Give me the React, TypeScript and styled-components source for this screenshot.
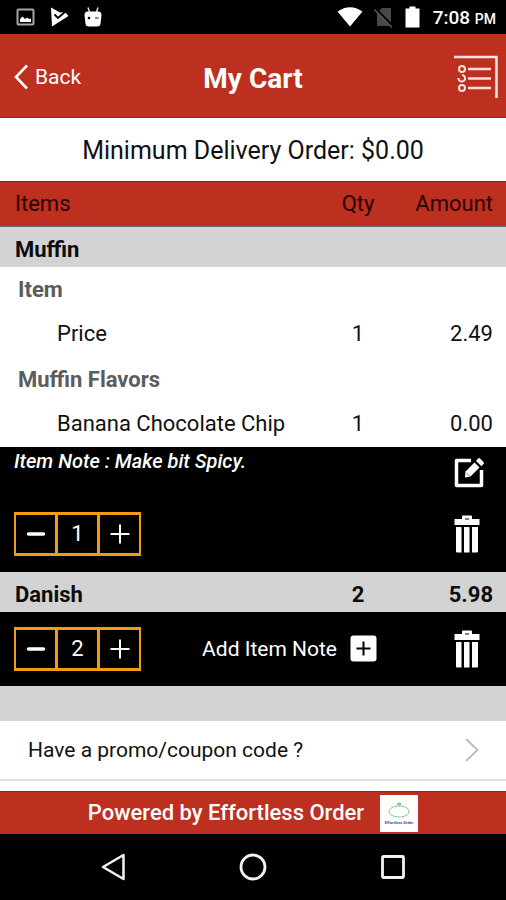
import React from "react";
import styled, { createGlobalStyle } from "styled-components";

const red = "#bd2f1e";
const silver = "#d3d3d3";
const orange = "#f39c12";

const GlobalStyle = createGlobalStyle`
  *, *::before, *::after { box-sizing: border-box; }
  body { margin: 0; background: #fff; font-family: Roboto, "Liberation Sans", sans-serif; color: #111; }
  button { border: 0; padding: 0; background: none; color: inherit; font: inherit; cursor: pointer; }
  svg { display: block; }
`;

const Page = styled.div`
  display: flex;
  flex-direction: column;
  min-height: 100vh;
`;

const StatusBar = styled.div`
  display: flex;
  align-items: center;
  justify-content: space-between;
  height: 34px;
  padding: 0 10px 0 16px;
  background: #000;
  color: #fff;
`;

const StatusGroup = styled.div<{ $gap: number }>`
  display: flex;
  align-items: center;
  gap: ${(p) => p.$gap}px;
`;

const Clock = styled.span`
  padding: 3px 0 0 2px;
  font-size: 19px;
  font-weight: 500;
  line-height: 24px;
  small { font-size: 14px; }
`;

const Header = styled.header`
  display: grid;
  grid-template-columns: 1fr auto 1fr;
  align-items: center;
  height: 84px;
  padding: 0 8px;
  background: ${red};
  border-bottom: 1px solid #b3150c;
  color: #fff;
`;

const BackButton = styled.button`
  display: flex;
  align-items: center;
  gap: 7px;
  justify-self: start;
  padding: 2px 0 0 6px;
  font-size: 21px;
  line-height: 28px;
`;

const Title = styled.h1`
  margin: 6px 0 0;
  font-size: 28px;
  line-height: 32px;
  font-weight: 700;
`;

const OrdersButton = styled.button`
  justify-self: end;
`;

const Minimum = styled.p`
  margin: 0;
  padding: 3px 0 0;
  font-size: 25px;
  line-height: 60px;
  text-align: center;
`;

const Cart = styled.table`
  width: 100%;
  border-collapse: collapse;
  table-layout: fixed;
  font-size: 22px;
  line-height: 28px;
  th, td { padding: 0; text-align: left; }
`;

const Column = styled.col<{ $width?: number }>`
  width: ${(p) => (p.$width ? `${p.$width}px` : "auto")};
`;

const HeadRow = styled.tr`
  height: 45px;
  background: ${red};
  border-top: 1px solid #b3150c;
  border-bottom: 1px solid #6b6b6b;
  color: #240503;
  th { font-weight: 400; }
`;

const ProductRow = styled.tr`
  height: 40px;
  background: ${silver};
  color: #0c0c0c;
  th, td { padding-top: 7px; font-weight: 700; }
`;

const GroupRow = styled.tr`
  height: 45px;
  color: #5c5c5c;
  th { padding-top: 2px; font-weight: 700; }
`;

const OptionRow = styled.tr`
  height: 45px;
  th { font-weight: 400; }
`;

const Label = styled.th<{ $indent: number }>`
  && { padding-left: ${(p) => p.$indent}px; }
`;

const Qty = styled.td`
  && { text-align: center; }
`;

const Amount = styled.td`
  && { padding-right: 13px; text-align: right; }
`;

const ControlsRow = styled.tr`
  background: #000;
  color: #fff;
`;

const NoteBar = styled.div`
  display: flex;
  justify-content: space-between;
  height: 50px;
  padding: 0 21px 0 14px;
`;

const Note = styled.em`
  font-size: 20px;
  font-weight: 500;
`;

const ControlBar = styled.div<{ $height: number }>`
  display: flex;
  align-items: center;
  height: ${(p) => p.$height}px;
  padding: 0 23px 0 14px;
`;

const IconButton = styled.button`
  display: flex;
  align-items: center;
  justify-content: center;
  width: 32px;
`;

const Stepper = styled.div`
  display: grid;
  grid-template-columns: repeat(3, 1fr);
  gap: 3px;
  width: 127px;
  height: 44px;
  margin-right: auto;
  padding: 3px 2px;
  background: ${orange};
`;

const StepCell = styled.output`
  display: flex;
  align-items: center;
  justify-content: center;
  background: #000;
`;

const StepButton = styled.button`
  display: flex;
  align-items: center;
  justify-content: center;
  background: #000;
`;

const AddNote = styled.button`
  display: flex;
  align-items: center;
  gap: 13px;
  margin-right: 74px;
  font-size: 21px;
`;

const Spacer = styled.div`
  height: 35px;
  background: ${silver};
`;

const Promo = styled.button`
  display: flex;
  align-items: center;
  justify-content: space-between;
  width: 100%;
  height: 60px;
  padding: 1px 27px 0 28px;
  border-bottom: 2px solid #e2e2e2;
  font-size: 21px;
  line-height: 28px;
`;

const Main = styled.main`
  flex: 1;
  padding-bottom: 10px;
`;

const Footer = styled.footer`
  display: flex;
  align-items: center;
  justify-content: center;
  gap: 16px;
  height: 43px;
  background: ${red};
  border-top: 1px solid #b3150c;
  color: #fff;
  font-size: 22px;
  font-weight: 500;
  line-height: 28px;
`;

const NavBar = styled.nav`
  display: flex;
  align-items: center;
  justify-content: center;
  gap: 96px;
  height: 66px;
  background: #000;
`;

const NavButton = styled.button`
  display: flex;
  align-items: center;
  justify-content: center;
  width: 44px;
  height: 44px;
`;

const PictureIcon = () => (
  <svg width="19" height="18" viewBox="0 0 19 18" aria-hidden="true">
    <rect x="1.5" y="1.5" width="16" height="15" rx="1" fill="none" stroke="#a6a6a6" strokeWidth="2" />
    <path d="M4 14V11L6.5 8.5L9 11L11 9.5L13 11L15 10.500V14Z" fill="#fff" />
  </svg>
);

const PlayCheckIcon = () => (
  <svg width="19" height="20" viewBox="0 0 19 20" aria-hidden="true">
    <path d="M1 0.500L10 5.500L15 5L18.500 9L2 19.500Z" fill="#fff" />
    <path d="M4.500 7.500L8 11L16 4" fill="none" stroke="#000" strokeWidth="1.800" />
  </svg>
);

const AndroidIcon = () => (
  <svg width="18" height="20" viewBox="0 0 18 20" aria-hidden="true">
    <path d="M4 0.500L5.500 5M14 0.500L12.500 5" stroke="#ddd" strokeWidth="1.500" />
    <path d="M3 4.500H15Q17.500 5 17.500 8L16.500 17Q16 19.500 13 19.500H5Q2 19.500 1.500 17L0.500 8Q0.500 5 3 4.500Z" fill="#fff" />
    <circle cx="5" cy="11" r="1.300" fill="#000" />
    <path d="M11 11H14.500" stroke="#444" strokeWidth="1.300" />
  </svg>
);

const WifiIcon = () => (
  <svg width="26" height="20" viewBox="0 0 26 20" aria-hidden="true">
    <path d="M0.500 4.500Q13 -4 25.500 4.500L13 19.500Z" fill="#fff" />
  </svg>
);

const NoSimIcon = () => (
  <svg width="20" height="21" viewBox="0 0 20 21" aria-hidden="true">
    <path d="M8 1H17V19H3V6Z" fill="#484848" />
    <path d="M1 1L18.500 19" stroke="#000" strokeWidth="2.500" />
    <path d="M0.500 2.500L18 20.500" stroke="#555" strokeWidth="1.600" />
  </svg>
);

const BatteryIcon = () => (
  <svg width="15" height="22" viewBox="0 0 15 22" aria-hidden="true">
    <path d="M4.500 0.500H10.500V2.500H14.500V21.500H0.500V2.500H4.500Z" fill="#fff" />
  </svg>
);

const ChevronLeft = () => (
  <svg width="14" height="26" viewBox="0 0 14 26" aria-hidden="true">
    <path d="M13 1.500L2 13L13 24.500" fill="none" stroke="#fff" strokeWidth="2.600" />
  </svg>
);

const ChevronRight = () => (
  <svg width="14" height="24" viewBox="0 0 14 24" aria-hidden="true">
    <path d="M1 1L12.500 12L1 23" fill="none" stroke="#bdbdbd" strokeWidth="2" />
  </svg>
);

const OrdersIcon = () => (
  <svg width="44" height="44" viewBox="0 0 44 44" fill="none" stroke="#ffe0da" aria-hidden="true">
    <path d="M0 3H42.500V44" strokeWidth="2.600" />
    <path d="M14 15H37M14 24.500H37M14 34H37" strokeWidth="2.500" />
    <circle cx="8" cy="15" r="3" strokeWidth="2" />
    <path d="M4.500 24A3.300 3.300 0 1 0 8 21" strokeWidth="2" />
    <circle cx="8" cy="34" r="3" strokeWidth="2" />
  </svg>
);

const EditIcon = () => (
  <svg width="32" height="32" viewBox="0 0 32 32" aria-hidden="true">
    <path d="M18 4.500H3.500V29.500H28.500V14" fill="none" stroke="#fff" strokeWidth="3.500" strokeLinejoin="round" />
    <path d="M12 21.500L12.500 15.500L21.500 6.500L26.500 11.500L17.500 20.500Z" fill="#fff" />
    <path d="M23 5L25 2.500Q26 1.500 27 2.500L30.500 6Q31.500 7 30.500 8L28.500 10.200Z" fill="#fff" />
    <path d="M13.500 17L16.500 20" stroke="#555" strokeWidth="0.800" />
  </svg>
);

const TrashIcon = () => (
  <svg width="26" height="38" viewBox="0 0 26 38" fill="#fff" aria-hidden="true">
    <path d="M8 4V1.500Q8 0.500 9 0.500H17Q18 0.500 18 1.500V4H25.500V10H0.500V4ZM11 3.500V4.500H15V3.500Z" fillRule="evenodd" />
    <path d="M2 12H7.500V37.500H3Q2 37.500 2 36.500ZM10 12H15.500V37.500H10ZM18 12H24V36.500Q24 37.500 23 37.500H18Z" />
  </svg>
);

const MinusIcon = () => (
  <svg width="20" height="20" viewBox="0 0 20 20" aria-hidden="true">
    <path d="M2.500 10H17.500" stroke="#fff" strokeWidth="3.500" strokeLinecap="round" />
  </svg>
);

const PlusIcon = () => (
  <svg width="20" height="20" viewBox="0 0 20 20" aria-hidden="true">
    <path d="M0.500 10H19.500M10 0.500V19.500" stroke="#fff" strokeWidth="2" />
  </svg>
);

const AddBoxIcon = () => (
  <svg width="27" height="27" viewBox="0 0 27 27" aria-hidden="true">
    <rect x="0.500" y="0.500" width="26" height="26" rx="3" fill="#fff" />
    <path d="M6.500 13.500H20.500M13.500 6.500V20.500" stroke="#000" strokeWidth="2" />
  </svg>
);

const BrandLogo = () => (
  <svg width="38" height="37" viewBox="0 0 38 37" role="img" aria-label="Effortless Order">
    <rect width="38" height="37" fill="#fff" />
    <ellipse cx="19" cy="16.500" rx="10" ry="5.500" fill="none" stroke="#62c46a" strokeWidth="1" strokeDasharray="3 0.600" />
    <ellipse cx="19" cy="9" rx="2" ry="1.200" fill="#8fd694" stroke="#62c46a" strokeWidth="0.600" />
    <text x="19" y="28.500" textAnchor="middle" fontSize="4" fontWeight="700" fill="#4a45b5">Effortless Order</text>
  </svg>
);

const QuantityStepper = ({ value }: { value: number }) => (
  <Stepper>
    <StepButton aria-label="Decrease quantity"><MinusIcon /></StepButton>
    <StepCell aria-label="Quantity">{value}</StepCell>
    <StepButton aria-label="Increase quantity"><PlusIcon /></StepButton>
  </Stepper>
);

const Group = ({ name }: { name: string }) => (
  <GroupRow>
    <Label $indent={18} colSpan={3}>{name}</Label>
  </GroupRow>
);

const Option = ({ name, qty, amount }: { name: string; qty: number; amount: string }) => (
  <OptionRow>
    <Label $indent={57} scope="row">{name}</Label>
    <Qty>{qty}</Qty>
    <Amount>{amount}</Amount>
  </OptionRow>
);

const RemoveButton = () => (
  <IconButton aria-label="Remove item"><TrashIcon /></IconButton>
);

export default function App() {
  return (
    <Page>
      <GlobalStyle />
      <StatusBar>
        <StatusGroup $gap={15}>
          <PictureIcon />
          <PlayCheckIcon />
          <AndroidIcon />
        </StatusGroup>
        <StatusGroup $gap={11}>
          <WifiIcon />
          <NoSimIcon />
          <BatteryIcon />
          <Clock>7:08 <small>PM</small></Clock>
        </StatusGroup>
      </StatusBar>
      <Header>
        <BackButton><ChevronLeft />Back</BackButton>
        <Title>My Cart</Title>
        <OrdersButton aria-label="Orders"><OrdersIcon /></OrdersButton>
      </Header>
      <Main>
        <Minimum>Minimum Delivery Order: $0.00</Minimum>
        <Cart>
          <colgroup>
            <Column />
            <Column $width={76} />
            <Column $width={110} />
          </colgroup>
          <thead>
            <HeadRow>
              <Label $indent={15} scope="col">Items</Label>
              <Qty as="th" scope="col">Qty</Qty>
              <Amount as="th" scope="col">Amount</Amount>
            </HeadRow>
          </thead>
          <tbody>
            <ProductRow>
              <Label $indent={15} colSpan={3}>Muffin</Label>
            </ProductRow>
            <Group name="Item" />
            <Option name="Price" qty={1} amount="2.49" />
            <Group name="Muffin Flavors" />
            <Option name="Banana Chocolate Chip" qty={1} amount="0.00" />
            <ControlsRow>
              <td colSpan={3}>
                <NoteBar>
                  <Note>Item Note : Make bit Spicy.</Note>
                  <IconButton aria-label="Edit item note"><EditIcon /></IconButton>
                </NoteBar>
                <ControlBar $height={75}>
                  <QuantityStepper value={1} />
                  <RemoveButton />
                </ControlBar>
              </td>
            </ControlsRow>
          </tbody>
          <tbody>
            <ProductRow>
              <Label $indent={15} scope="row">Danish</Label>
              <Qty>2</Qty>
              <Amount>5.98</Amount>
            </ProductRow>
            <ControlsRow>
              <td colSpan={3}>
                <ControlBar $height={74}>
                  <QuantityStepper value={2} />
                  <AddNote>Add Item Note<AddBoxIcon /></AddNote>
                  <RemoveButton />
                </ControlBar>
              </td>
            </ControlsRow>
          </tbody>
        </Cart>
        <Spacer />
        <Promo>Have a promo/coupon code ?<ChevronRight /></Promo>
      </Main>
      <Footer>
        Powered by Effortless Order
        <BrandLogo />
      </Footer>
      <NavBar>
        <NavButton aria-label="Back">
          <svg width="26" height="28" viewBox="0 0 26 28" aria-hidden="true">
            <path d="M23.500 2V26L3 14Z" fill="none" stroke="#f2f2f2" strokeWidth="2.500" strokeLinejoin="round" />
          </svg>
        </NavButton>
        <NavButton aria-label="Home">
          <svg width="28" height="28" viewBox="0 0 28 28" aria-hidden="true">
            <circle cx="14" cy="14" r="12" fill="none" stroke="#f2f2f2" strokeWidth="2.800" />
          </svg>
        </NavButton>
        <NavButton aria-label="Recent apps">
          <svg width="26" height="26" viewBox="0 0 26 26" aria-hidden="true">
            <rect x="2.500" y="2.500" width="21" height="21" rx="1" fill="none" stroke="#f2f2f2" strokeWidth="2.800" />
          </svg>
        </NavButton>
      </NavBar>
    </Page>
  );
}
